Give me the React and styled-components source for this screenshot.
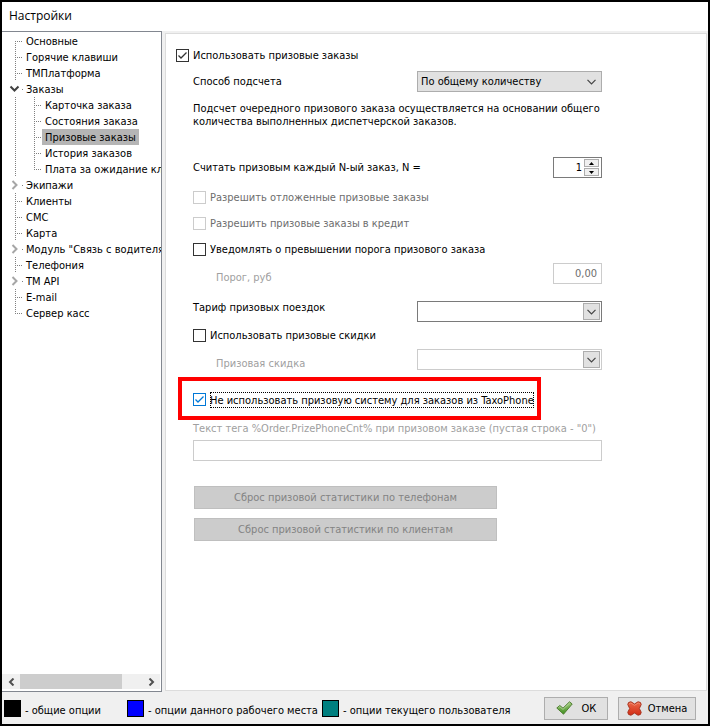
import { useState } from "react";
import styled, { createGlobalStyle } from "styled-components";

const GlobalStyle = createGlobalStyle`
  *{
    box-sizing:border-box;
  }
  body{
    margin:0;
    background-color:#f0f0f0;
  }
  body, button, input, select{
    font-family:"DejaVu Sans Condensed","Liberation Sans",sans-serif;
    font-size:11px;
    line-height:13px;
    color:#000;
  }
`;
const Dialog = styled.div`
  display:flex;
  flex-direction:column;
  min-height:100vh;
  border:2px solid #000;
  background-color:#f0f0f0;
`;
const TitleBar = styled.header`
  height:29px;
  padding:0 7px;
  background-color:#fff;
`;
const Title = styled.h1`
  margin:0;
  font-family:"Open Sans",sans-serif;
  font-size:12px;
  font-weight:400;
  line-height:28px;
`;
const Main = styled.main`
  flex:1;
  display:flex;
`;
const Sidebar = styled.nav`
  flex:none;
  display:flex;
  flex-direction:column;
  width:160px;
  border:solid #828790;
  border-width:1px 1px 1px 0;
  padding:1px 0 2px;
  background-color:#fff;
`;
const Tree = styled.ul`
  flex:1;
  margin:0;
  padding:0;
  list-style:none;
  overflow:hidden;
`;
const Branch = styled.li`
  display:flex;
  height:16px;
`;
const Gutter = styled.svg`
  flex:none;
  height:16px;
  fill:none;
`;
const NodeLink = styled.a`
  flex:none;
  padding:2px 3px 0;
  line-height:14px;
  color:#000;
  text-decoration:none;
  white-space:nowrap;
  background-color:${props => (props.$active ? "#b5b5b5" : "transparent")};
`;
const ScrollBar = styled.div`
  display:flex;
  height:15px;
  margin-right:1px;
  background-color:#f0f0f0;
`;
const ScrollButton = styled.button`
  display:flex;
  align-items:center;
  justify-content:center;
  width:18px;
  padding:0;
  border:0;
  background-color:transparent;
`;
const ScrollTrack = styled.div`
  flex:1;
`;
const ScrollThumb = styled.div`
  width:84%;
  height:100%;
  background-color:#cdcdcd;
`;
const Panel = styled.section`
  flex:1;
  margin:2px 1px 1px 3px;
  border:1px solid #dcdcdc;
  padding:15px 10px;
  background-color:#fff;
`;
const Form = styled.form`
  max-width:426px;
`;
const Indent = styled.div`
  padding-left:17px;
`;
const Row = styled.div`
  display:flex;
  align-items:${props => props.$align || "center"};
  justify-content:space-between;
  margin-top:${props => props.$top}px;
`;
const Label = styled.label`
  padding-left:${props => (props.$nested ? 23 : 0)}px;
  color:${props => (props.$muted ? "#a0a0a0" : "#000")};
`;
const Hint = styled.p`
  margin:10px 0 0;
`;
const CheckLabel = styled.label`
  display:flex;
  align-items:center;
  gap:4px;
  margin-top:${props => props.$top || 0}px;
  color:${props => (props.$muted ? "#6d6d6d" : "#000")};
`;
const CheckBox = styled.span`
  display:grid;
  width:13px;
  height:13px;
  color:${props => (props.$focused ? "#0078d7" : "#333")};
  > *{
    grid-area:1 / 1;
  }
`;
const CheckInput = styled.input`
  appearance:none;
  width:13px;
  height:13px;
  margin:0;
  border:1px solid ${props => (props.$focused ? "#0078d7" : "#333")};
  background-color:#fff;
  &:disabled{
    border-color:#ccc;
  }
`;
const CheckMark = styled.svg`
  width:13px;
  height:13px;
  fill:none;
  stroke:currentColor;
  pointer-events:none;
`;
const CheckText = styled.span`
  padding:${props => (props.$focused ? "2px 0 1px" : "0")};
  outline:${props => (props.$focused ? "1px dotted #000" : "none")};
  outline-offset:-1px;
`;
const SelectBox = styled.div`
  display:grid;
  grid-template-columns:1fr auto;
  align-items:center;
  width:185px;
  height:21px;
`;
const Select = styled.select`
  grid-area:1 / 1 / 2 / 3;
  appearance:none;
  width:100%;
  height:21px;
  padding:0 3px;
  border:1px solid ${props => (props.$flat ? "#adadad" : "#7a7a7a")};
  border-radius:0;
  background-color:${props => (props.$flat ? "#e1e1e1" : "#fff")};
  &:disabled{
    border-color:#ccc;
    opacity:1;
  }
`;
const Arrow = styled.span`
  grid-area:1 / 2;
  display:flex;
  align-items:center;
  justify-content:center;
  width:17px;
  height:17px;
  margin-right:2px;
  border:${props => (props.$flat ? "0" : "1px solid #adadad")};
  background-color:#e1e1e1;
  pointer-events:none;
`;
const NumberBox = styled.div`
  display:flex;
  align-items:center;
  width:49px;
  height:21px;
  padding-right:2px;
  border:1px solid ${props => (props.$disabled ? "#ccc" : "#7a7a7a")};
  background-color:#fff;
`;
const NumberInput = styled.input`
  flex:1;
  min-width:0;
  padding:0 2px;
  border:0;
  background-color:transparent;
  text-align:right;
  &:disabled{
    color:#6d6d6d;
  }
`;
const Spinner = styled.div`
  display:flex;
  flex-direction:column;
  gap:1px;
`;
const SpinButton = styled.button`
  display:flex;
  align-items:center;
  justify-content:center;
  width:15px;
  height:8px;
  padding:0;
  border:1px solid #adadad;
  background-color:#f0f0f0;
`;
const Highlight = styled.div`
  display:flex;
  align-items:center;
  width:363px;
  height:43px;
  margin:7px 0 0 2px;
  border:4px solid #f00;
  padding:2px 0 0 11px;
`;
const TextField = styled.input`
  display:block;
  width:100%;
  height:21px;
  margin-top:5px;
  border:1px solid #ccc;
  background-color:#fff;
`;
const Actions = styled.div`
  display:flex;
  flex-direction:column;
  gap:9px;
  width:303px;
  margin:25px 0 0 1px;
`;
const ResetButton = styled.button`
  height:23px;
  border:1px solid #bfbfbf;
  background-color:#ccc;
  &:disabled{
    color:#838383;
  }
`;
const Footer = styled.footer`
  display:flex;
  align-items:center;
  height:32px;
  padding:0 12px 0 2px;
`;
const Legend = styled.ul`
  flex:1;
  display:grid;
  grid-template-columns:123px 195px auto;
  margin:0;
  padding:0;
  list-style:none;
  white-space:nowrap;
`;
const LegendItem = styled.li`
  display:flex;
  align-items:end;
  gap:4px;
`;
const Swatch = styled.span`
  width:17px;
  height:17px;
  border:1px solid #000;
  background-color:${props => props.$color};
`;
const Buttons = styled.div`
  display:flex;
  gap:10px;
`;
const DialogButton = styled.button`
  display:flex;
  align-items:center;
  justify-content:center;
  gap:${props => props.$gap}px;
  width:${props => props.$width}px;
  height:23px;
  padding:0;
  border:1px solid #adadad;
  background-color:#e1e1e1;
`;

const nodes = [
  { text: "Основные", first: true },
  { text: "Горячие клавиши" },
  { text: "ТМПлатформа" },
  { text: "Заказы", state: "open" },
  { text: "Карточка заказа", child: true },
  { text: "Состояния заказа", child: true },
  { text: "Призовые заказы", child: true, active: true },
  { text: "История заказов", child: true },
  { text: "Плата за ожидание кл", child: true, last: true },
  { text: "Экипажи", state: "closed" },
  { text: "Клиенты" },
  { text: "СМС" },
  { text: "Карта" },
  { text: 'Модуль "Связь с водителя', state: "closed" },
  { text: "Телефония" },
  { text: "TM API", state: "closed" },
  { text: "E-mail" },
  { text: "Сервер касс", last: true },
];

function TreeNode({ node }) {
  const width = node.child ? 40 : 21;
  const x = node.child ? 32 : 13;
  const top = node.first ? 8 : 0;
  const bottom = node.last ? 9 : 16;
  return (
    <Branch>
      <Gutter width={width} viewBox={`0 0 ${width} 16`} aria-hidden="true">
        <g stroke="#808080" strokeDasharray="1 1" shapeRendering="crispEdges">
          {node.child && <path d="M13.5 0V16" />}
          {!node.state && <path d={`M${x + 0.5} ${top}V${bottom}M${x + 2} 8.5H${width}`} />}
          {node.state && <path d="M20 8.5H22" />}
        </g>
        {node.state === "open" && <path d="M8.500 5.500L12.500 9.500L16.500 5.500" stroke="#404040" strokeWidth="2" />}
        {node.state === "closed" && <path d="M10.500 4L14.500 8L10.500 12" stroke="#a6a6a6" strokeWidth="2" />}
      </Gutter>
      <NodeLink href="#" $active={node.active}>{node.text}</NodeLink>
    </Branch>
  );
}

function Check({ text, top, muted, focused, defaultChecked }) {
  const [checked, setChecked] = useState(!!defaultChecked);
  return (
    <CheckLabel $top={top} $muted={muted}>
      <CheckBox $focused={focused}>
        <CheckInput type="checkbox" $focused={focused} checked={checked} disabled={muted} onChange={() => setChecked(prev => !prev)} />
        {checked && <CheckMark viewBox="0 0 13 13"><path d="M2.500 6.500L5 9L10.500 3.500" strokeWidth="1.300" /></CheckMark>}
      </CheckBox>
      <CheckText $focused={focused}>{text}</CheckText>
    </CheckLabel>
  );
}

function DropDown({ id, options, flat, disabled }) {
  return (
    <SelectBox>
      <Select id={id} $flat={flat} disabled={disabled}>
        {options.map(option => <option key={option}>{option}</option>)}
      </Select>
      <Arrow $flat={flat}>
        <svg width="9" height="6" viewBox="0 0 9 6" fill="none" stroke="#444"><path d="M.5 .8L4.500 4.800L8.500 .8" strokeWidth="1.200" /></svg>
      </Arrow>
    </SelectBox>
  );
}

function OkIcon() {
  return (
    <svg width="17" height="14" viewBox="0 0 17 14" aria-hidden="true">
      <defs>
        <linearGradient id="okFill" x1="0" y1="0" x2="0" y2="1">
          <stop offset="0" stopColor="#a5cc82" />
          <stop offset="1" stopColor="#3f8f1e" />
        </linearGradient>
      </defs>
      <path d="M.8 7L3.800 4.500L7 7.200L13.500 .8L16.200 3L7.500 13.200Z" fill="url(#okFill)" stroke="#507f33" strokeLinejoin="round" />
      <path d="M2.500 6.700L3.800 5.700L7 8.400L13.500 2.100" fill="none" stroke="#cfe6b8" strokeWidth=".6" />
    </svg>
  );
}

function CancelIcon() {
  return (
    <svg width="15" height="15" viewBox="0 0 15 15" aria-hidden="true">
      <defs>
        <linearGradient id="cancelFill" x1="0" y1="0" x2="0" y2="1">
          <stop offset="0" stopColor="#ec6a4a" />
          <stop offset="1" stopColor="#d22c14" />
        </linearGradient>
      </defs>
      <path d="M.8 3.500Q.8 .8 4 .8L7.500 3L11 .8Q14.200 .8 14.200 3.500L12.300 7.500L14.200 11.200Q14.200 14.200 11 14.200L7.500 12L4 14.200Q.8 14.200 .8 11.200L2.700 7.500Z" fill="url(#cancelFill)" stroke="#a83420" strokeLinejoin="round" />
      <path d="M2 3.500Q2.200 2 3.800 2L7.500 4.300L11.200 2Q12.800 2 13 3.500" fill="none" stroke="#f5a48b" strokeWidth=".6" />
    </svg>
  );
}

export default function App() {
  const [every, setEvery] = useState(1);
  return (
    <>
      <GlobalStyle />
      <Dialog>
        <TitleBar>
          <Title>Настройки</Title>
        </TitleBar>
        <Main>
          <Sidebar>
            <Tree>
              {nodes.map(node => <TreeNode key={node.text} node={node} />)}
            </Tree>
            <ScrollBar>
              <ScrollButton aria-label="Влево">
                <svg width="7" height="8" viewBox="0 0 7 8" fill="none" stroke="#505050" strokeWidth="2"><path d="M5.500 .5L2 4L5.500 7.500" /></svg>
              </ScrollButton>
              <ScrollTrack><ScrollThumb /></ScrollTrack>
              <ScrollButton aria-label="Вправо">
                <svg width="7" height="8" viewBox="0 0 7 8" fill="none" stroke="#505050" strokeWidth="2"><path d="M1.500 .5L5 4L1.500 7.500" /></svg>
              </ScrollButton>
            </ScrollBar>
          </Sidebar>
          <Panel>
            <Form>
              <Check text="Использовать призовые заказы" defaultChecked />
              <Indent>
                <Row $top={9}>
                  <Label htmlFor="method">Способ подсчета</Label>
                  <DropDown id="method" options={["По общему количеству"]} flat />
                </Row>
                <Hint>
                  Подсчет очередного призового заказа осуществляется на основании общего количества выполненных диспетчерской заказов.
                </Hint>
                <Row $top={29}>
                  <Label htmlFor="every">Считать призовым каждый N-ый заказ, N =</Label>
                  <NumberBox>
                    <NumberInput id="every" value={every} onChange={e => setEvery(Number(e.target.value) || 1)} />
                    <Spinner>
                      <SpinButton type="button" aria-label="Больше" onClick={() => setEvery(prev => prev + 1)}>
                        <svg width="5" height="3" viewBox="0 0 5 3"><path d="M0 3L2.500 0L5 3Z" /></svg>
                      </SpinButton>
                      <SpinButton type="button" aria-label="Меньше" onClick={() => setEvery(prev => Math.max(1, prev - 1))}>
                        <svg width="5" height="3" viewBox="0 0 5 3"><path d="M0 0L2.500 3L5 0Z" /></svg>
                      </SpinButton>
                    </Spinner>
                  </NumberBox>
                </Row>
                <Check top={13} text="Разрешить отложенные призовые заказы" muted />
                <Check top={13} text="Разрешить призовые заказы в кредит" muted />
                <Check top={13} text="Уведомлять о превышении порога призового заказа" />
                <Row $top={7} $align="end">
                  <Label htmlFor="limit" $nested $muted>Порог, руб</Label>
                  <NumberBox $disabled>
                    <NumberInput id="limit" defaultValue="0,00" disabled />
                  </NumberBox>
                </Row>
                <Row $top={17} $align="start">
                  <Label htmlFor="tariff">Тариф призовых поездок</Label>
                  <DropDown id="tariff" options={[""]} />
                </Row>
                <Check top={7} text="Использовать призовые скидки" />
                <Row $top={7} $align="end">
                  <Label htmlFor="discount" $nested $muted>Призовая скидка</Label>
                  <DropDown id="discount" options={[""]} disabled />
                </Row>
              </Indent>
              <Highlight>
                <Check text="Не использовать призовую систему для заказов из TaxoPhone" defaultChecked focused />
              </Highlight>
              <Indent>
                <Row $top={2}>
                  <Label htmlFor="tag" $muted>Текст тега %Order.PrizePhoneCnt% при призовом заказе (пустая строка - "0")</Label>
                </Row>
                <TextField id="tag" disabled />
                <Actions>
                  <ResetButton type="button" disabled>Сброс призовой статистики по телефонам</ResetButton>
                  <ResetButton type="button" disabled>Сброс призовой статистики по клиентам</ResetButton>
                </Actions>
              </Indent>
            </Form>
          </Panel>
        </Main>
        <Footer>
          <Legend>
            <LegendItem><Swatch $color="#000" />- общие опции</LegendItem>
            <LegendItem><Swatch $color="#00f" />- опции данного рабочего места</LegendItem>
            <LegendItem><Swatch $color="#008080" />- опции текущего пользователя</LegendItem>
          </Legend>
          <Buttons>
            <DialogButton $gap={9} $width={64}>
              <OkIcon />
              ОК
            </DialogButton>
            <DialogButton $gap={6} $width={78}>
              <CancelIcon />
              Отмена
            </DialogButton>
          </Buttons>
        </Footer>
      </Dialog>
    </>
  );
}
